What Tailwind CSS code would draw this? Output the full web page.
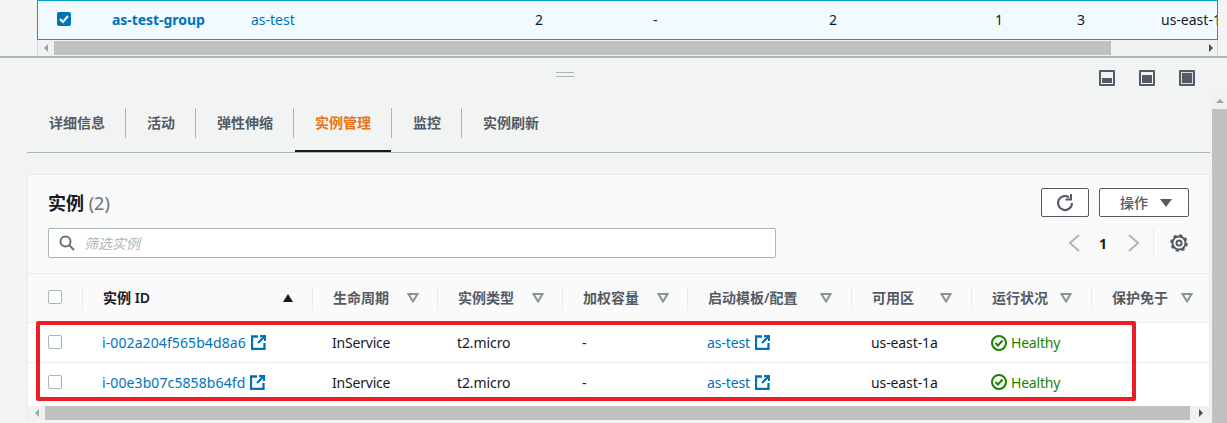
<!doctype html>
<html lang="zh"><head><meta charset="utf-8"><script src="https://cdn.jsdelivr.net/npm/@tailwindcss/browser@4"></script></head>
<body class="relative w-[1227px] h-[423px] overflow-hidden bg-[#f2f3f3] text-[14px] text-[#16191f] font-['Noto_Sans','Noto_Sans_CJK_SC',sans-serif]">
<!-- top pane -->
<div class="h-[58px] border-b-2 border-[#aab7b8] pl-[37px] pr-[9px]">
  <div class="h-[56px] border-x border-[#d5dbdb]">
    <div class="h-[40px] -ml-px -mr-px bg-[#f1faff] border border-[#00a1c9] flex items-center overflow-hidden whitespace-nowrap pb-[2px]">
      <span class="w-[74px] pl-[19px] shrink-0 flex"><span class="w-[14px] h-[14px] rounded-[2px] bg-[#0073bb] flex items-center justify-center"><svg width="12" height="12" viewBox="0 0 12 12" fill="none" stroke="#fff" stroke-width="2"><path d="M2 6l3 3 5-6"/></svg></span></span>
      <a class="w-[139px] shrink-0 font-bold text-[#0073bb] tracking-[-0.05px]">as-test-group</a>
      <a class="w-[284px] shrink-0 text-[#0073bb]">as-test</a>
      <span class="w-[118px] shrink-0">2</span>
      <span class="w-[176px] shrink-0">-</span>
      <span class="w-[166px] shrink-0">2</span>
      <span class="w-[82px] shrink-0">1</span>
      <span class="w-[84px] shrink-0">3</span>
      <span class="shrink-0">us-east-1a</span>
    </div>
    <div class="h-[14px] mt-px bg-[#f1f1f1] flex items-center">
      <span class="w-[16px] flex justify-center"><span class="border-y-[4px] border-r-[4px] border-y-transparent border-r-[#a3a3a3]"></span></span>
      <span class="w-[1057px] h-[14px] bg-[#c1c1c1]"></span>
      <span class="ml-auto mr-[4px] border-y-[4px] border-l-[4px] border-y-transparent border-l-[#505050]"></span>
    </div>
  </div>
</div>
<!-- lower pane strip -->
<div class="h-[37px] relative flex justify-end items-start pr-[32px] gap-[24px] pt-[12px]">
  <div class="absolute left-[556px] top-[14px] w-[18px] h-[5px] border-y border-[#aab7b8]"></div>
  <svg width="16" height="16" viewBox="0 0 16 16"><rect width="16" height="16" rx="1" fill="#545b64"/><rect x="2" y="2" width="12" height="12" fill="#f2f3f3"/><rect x="3" y="8" width="10" height="5" fill="#545b64"/></svg>
  <svg width="16" height="16" viewBox="0 0 16 16"><rect width="16" height="16" rx="1" fill="#545b64"/><rect x="2" y="2" width="12" height="12" fill="#f2f3f3"/><rect x="3" y="5" width="10" height="8" fill="#545b64"/></svg>
  <svg width="16" height="16" viewBox="0 0 16 16"><rect width="16" height="16" rx="1" fill="#545b64"/><rect x="2" y="2" width="12" height="12" fill="#d5dbdb"/><rect x="3" y="3" width="10" height="10" fill="#545b64"/></svg>
</div>
<div class="flex h-[328px]">
  <div class="w-[1212px] pl-[27px] pr-[2px] shrink-0">
    <!-- tabs -->
    <div class="mt-[13px] h-[45px] border-b border-[#aab7b8] flex font-semibold text-[#545b64]">
      <div class="h-[44px]"><div class="h-[30px] pb-[2px] flex items-center pl-[22px] pr-[20px] border-r border-[#aab7b8]">详细信息</div></div>
      <div class="h-[44px]"><div class="h-[30px] pb-[2px] flex items-center pl-[21px] pr-[20px] border-r border-[#aab7b8]">活动</div></div>
      <div class="h-[44px]"><div class="h-[30px] pb-[2px] flex items-center pl-[21px] pr-[20px] border-r border-[#aab7b8]">弹性伸缩</div></div>
      <div class="h-[44px] relative text-[#ec7211]"><div class="h-[30px] pb-[2px] flex items-center pl-[21px] pr-[20px] border-r border-[#aab7b8]">实例管理</div><div class="absolute left-px right-px bottom-0 h-[2px] bg-[#16191f]"></div></div>
      <div class="h-[44px]"><div class="h-[30px] pb-[2px] flex items-center pl-[21px] pr-[20px] border-r border-[#aab7b8]">监控</div></div>
      <div class="h-[44px]"><div class="h-[30px] pb-[2px] flex items-center pl-[21px] pr-[20px]">实例刷新</div></div>
    </div>
    <!-- card -->
    <div class="mt-[21px] h-[246px] border-t border-l border-[#eaeded] border-r border-b-2 border-b-[#c6cccc] bg-white">
      <div class="h-[99px] bg-[#fafafa] border-b border-[#eaeded] px-5 relative">
        <div class="pt-[13px] h-[42px] flex justify-between">
          <div class="text-[18px] leading-[31px] font-bold">实例 <span class="font-normal text-[#687078]">(2)</span></div>
          <div class="flex gap-[10px] text-[#545b64]">
            <button class="w-[48px] h-[29px] border border-[#545b64] rounded-[2px] bg-white flex items-center justify-center"><svg width="20" height="20" viewBox="0 0 20 20" fill="none" stroke="#545b64" stroke-width="2.200"><path d="M17 10a7 7 0 1 1-3-5.700"/><path d="M16 1v5.500h-5.500" stroke-width="2"/></svg></button>
            <button class="w-[90px] h-[29px] border border-[#545b64] rounded-[2px] bg-white flex items-center pl-[20px] gap-[12px]"><span class="font-medium">操作</span><span class="border-x-[6px] border-t-[8px] border-x-transparent border-t-[#545b64]"></span></button>
          </div>
        </div>
        <div class="mt-[11px] h-[30px] flex items-center">
          <div class="w-[728px] h-[30px] bg-white border border-[#aab7b8] rounded-[2px] flex items-center pl-[10px] gap-[9px]">
            <svg width="16" height="16" viewBox="0 0 16 16" fill="none" stroke="#687078" stroke-width="2"><circle cx="6.5" cy="6.5" r="5"/><path d="M10 10l5 5"/></svg>
            <span class="italic text-[14px] text-[#aab7b8]">筛选实例</span>
          </div>
          <div class="ml-auto flex items-center h-[30px] pr-[1px]">
            <svg width="14" height="20" viewBox="0 0 14 20" fill="none" stroke="#aab7b8" stroke-width="2" class="mr-[18px]"><path d="M12 2L3 10l9 8"/></svg>
            <span class="w-[8px] font-bold mr-[20px]">1</span>
            <svg width="14" height="20" viewBox="0 0 14 20" fill="none" stroke="#aab7b8" stroke-width="2" class="mr-[12px]"><path d="M2 2l9 8-9 8"/></svg>
            <div class="h-[30px] border-l border-[#eaeded] pl-[16px] flex items-center">
              <svg width="18" height="18" viewBox="0 0 18 18" fill="none" stroke="#545b64"><circle cx="9" cy="9" r="6.500" stroke-width="2"/><circle cx="9" cy="9" r="2.500" stroke-width="2"/><circle cx="9" cy="9" r="7.500" stroke-width="2.500" stroke-dasharray="3.200 2.690"/></svg>
            </div>
          </div>
        </div>
      </div>
      <!-- header -->
      <div class="h-[49px] bg-[#fafafa] border-b border-[#eaeded] grid grid-cols-[55px_230px_125px_125px_125px_164px_120px_120px_118px] items-center text-[14px] font-semibold text-[#545b64] whitespace-nowrap">
        <div class="h-6 pl-5 border-r border-[#eaeded] flex items-center"><span class="w-[14px] h-[14px] -mt-[2px] bg-white border border-[#aab7b8] rounded-[2px]"></span></div>
        <div class="h-6 pl-5 pr-[19px] border-r border-[#eaeded] flex items-center justify-between text-[#16191f]"><span class="-mt-[2px]">实例 ID</span><span class="border-x-[5.5px] border-b-[8px] border-x-transparent border-b-[#16191f]"></span></div>
        <div class="h-6 pl-5 pr-[18px] border-r border-[#eaeded] flex items-center justify-between"><span class="-mt-[2px]">生命周期</span><svg width="12" height="10" viewBox="0 0 12 10" fill="none" stroke="#879596" stroke-width="2"><path d="M1.500 1h9L6 8.500z"/></svg></div>
        <div class="h-6 pl-5 pr-[18px] border-r border-[#eaeded] flex items-center justify-between"><span class="-mt-[2px]">实例类型</span><svg width="12" height="10" viewBox="0 0 12 10" fill="none" stroke="#879596" stroke-width="2"><path d="M1.500 1h9L6 8.500z"/></svg></div>
        <div class="h-6 pl-5 pr-[18px] border-r border-[#eaeded] flex items-center justify-between"><span class="-mt-[2px]">加权容量</span><svg width="12" height="10" viewBox="0 0 12 10" fill="none" stroke="#879596" stroke-width="2"><path d="M1.500 1h9L6 8.500z"/></svg></div>
        <div class="h-6 pl-5 pr-[19px] border-r border-[#eaeded] flex items-center justify-between"><span class="-mt-[2px]">启动模板/配置</span><svg width="12" height="10" viewBox="0 0 12 10" fill="none" stroke="#879596" stroke-width="2"><path d="M1.500 1h9L6 8.500z"/></svg></div>
        <div class="h-6 pl-5 pr-[19px] border-r border-[#eaeded] flex items-center justify-between"><span class="-mt-[2px]">可用区</span><svg width="12" height="10" viewBox="0 0 12 10" fill="none" stroke="#879596" stroke-width="2"><path d="M1.500 1h9L6 8.500z"/></svg></div>
        <div class="h-6 pl-5 pr-[19px] border-r border-[#eaeded] flex items-center justify-between"><span class="-mt-[2px]">运行状况</span><svg width="12" height="10" viewBox="0 0 12 10" fill="none" stroke="#879596" stroke-width="2"><path d="M1.500 1h9L6 8.500z"/></svg></div>
        <div class="h-6 pl-5 pr-[17px] flex items-center justify-between"><span class="-mt-[2px]">保护免于</span><svg width="12" height="10" viewBox="0 0 12 10" fill="none" stroke="#879596" stroke-width="2"><path d="M1.500 1h9L6 8.500z"/></svg></div>
      </div>
      <!-- rows -->
      <div class="h-[40px] border-b border-[#eaeded] grid grid-cols-[55px_230px_125px_125px_125px_164px_120px_120px_118px] items-center whitespace-nowrap">
        <div class="pl-5 flex"><span class="w-[14px] h-[14px] -mt-[2px] bg-white border border-[#aab7b8] rounded-[2px]"></span></div>
        <div class="pl-[19px] flex items-center gap-[5px] text-[#0073bb]"><span class="tracking-[0.1px]">i-002a204f565b4d8a6</span><svg width="15" height="15" viewBox="0 0 15 15" fill="none" stroke="#0073bb" stroke-width="2.300"><path d="M7 1.500H1V14H13.500V8M9 1H14V6M14 1L7 8"/></svg></div>
        <div class="pl-[19px] tracking-[-0.2px]">InService</div><div class="pl-[19px] tracking-[-0.1px]">t2.micro</div><div class="pl-[19px]">-</div>
        <div class="pl-[19px] flex items-center gap-[5px] text-[#0073bb]"><span class="tracking-[-0.1px]">as-test</span><svg width="15" height="15" viewBox="0 0 15 15" fill="none" stroke="#0073bb" stroke-width="2.300"><path d="M7 1.500H1V14H13.500V8M9 1H14V6M14 1L7 8"/></svg></div>
        <div class="pl-[19px] tracking-[-0.1px]">us-east-1a</div>
        <div class="pl-[19px] flex items-center gap-1 text-[#1d8102] tracking-[-0.2px]"><svg width="16" height="16" viewBox="0 0 16 16" fill="none" stroke="#1d8102" stroke-width="2"><circle cx="8" cy="8" r="7"/><path d="M4.500 8l2.500 2.500 4.500-5"/></svg><span>Healthy</span></div>
        <div></div>
      </div>
      <div class="h-[40px] pb-[2px] grid grid-cols-[55px_230px_125px_125px_125px_164px_120px_120px_118px] items-center whitespace-nowrap">
        <div class="pl-5 flex"><span class="w-[14px] h-[14px] bg-white border border-[#aab7b8] rounded-[2px]"></span></div>
        <div class="pl-[19px] flex items-center gap-[5px] text-[#0073bb]"><span class="tracking-[0.1px]">i-00e3b07c5858b64fd</span><svg width="15" height="15" viewBox="0 0 15 15" fill="none" stroke="#0073bb" stroke-width="2.300"><path d="M7 1.500H1V14H13.500V8M9 1H14V6M14 1L7 8"/></svg></div>
        <div class="pl-[19px] tracking-[-0.2px]">InService</div><div class="pl-[19px] tracking-[-0.1px]">t2.micro</div><div class="pl-[19px]">-</div>
        <div class="pl-[19px] flex items-center gap-[5px] text-[#0073bb]"><span class="tracking-[-0.1px]">as-test</span><svg width="15" height="15" viewBox="0 0 15 15" fill="none" stroke="#0073bb" stroke-width="2.300"><path d="M7 1.500H1V14H13.500V8M9 1H14V6M14 1L7 8"/></svg></div>
        <div class="pl-[19px] tracking-[-0.1px]">us-east-1a</div>
        <div class="pl-[19px] flex items-center gap-1 text-[#1d8102] tracking-[-0.2px]"><svg width="16" height="16" viewBox="0 0 16 16" fill="none" stroke="#1d8102" stroke-width="2"><circle cx="8" cy="8" r="7"/><path d="M4.500 8l2.500 2.500 4.500-5"/></svg><span>Healthy</span></div>
        <div></div>
      </div>
      <!-- table scrollbar -->
      <div class="h-[14px] mt-[3px] bg-[#f1f1f1] flex items-center">
        <span class="w-[17px] flex justify-center"><span class="border-y-[4px] border-r-[4px] border-y-transparent border-r-[#a3a3a3]"></span></span>
        <span class="w-[1145px] h-[14px] bg-[#c1c1c1]"></span>
        <span class="ml-auto mr-[6px] border-y-[4px] border-l-[4px] border-y-transparent border-l-[#505050]"></span>
      </div>
    </div>
  </div>
  <!-- page scrollbar -->
  <div class="w-[15px] bg-[#f1f1f1] flex flex-col items-center">
    <span class="mt-[4px] border-x-[4px] border-b-[4px] border-x-transparent border-b-[#a3a3a3]"></span>
    <span class="mt-[6px] w-full flex-1 bg-[#c1c1c1]"></span>
  </div>
</div>
<!-- red annotation box -->
<div class="absolute left-[36px] top-[321px] w-[1100px] h-[80px] border-[4px] border-[#ee1c25] rounded-[2px]"></div>
</body></html>
